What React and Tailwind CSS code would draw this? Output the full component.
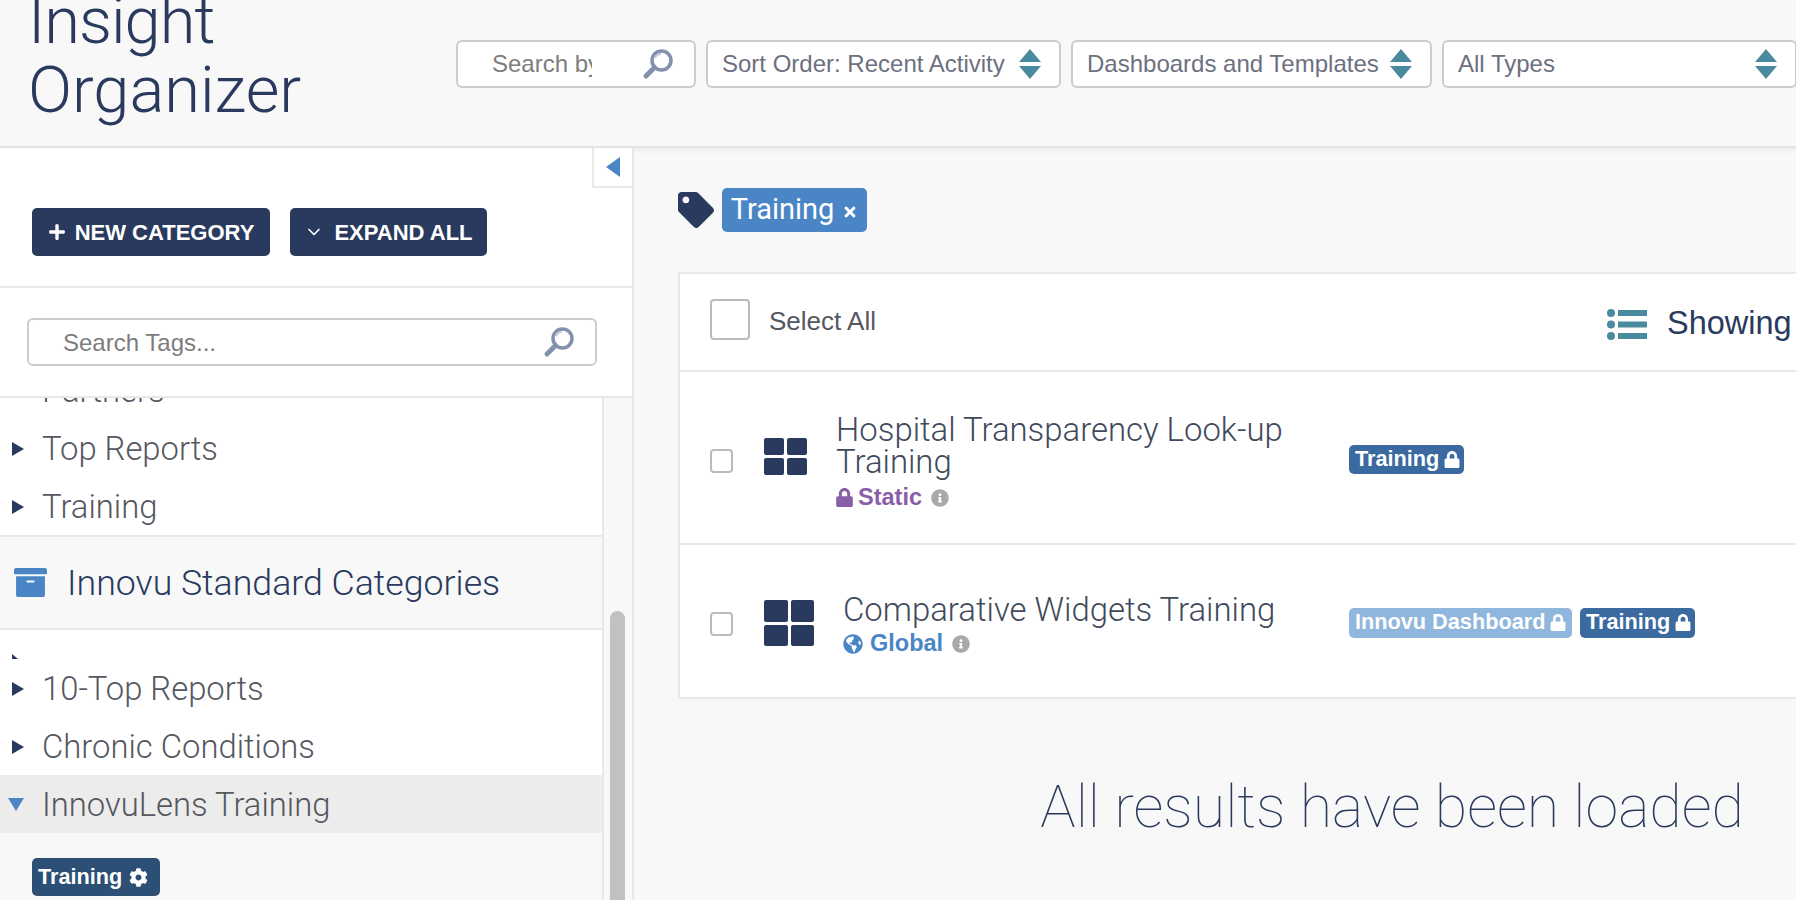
import React from "react";
import {
  FaPlus,
  FaTag,
  FaTimes,
  FaLock,
  FaCog,
  FaGlobeAmericas,
  FaInfoCircle,
  FaArchive,
} from "react-icons/fa";
import { FiChevronDown } from "react-icons/fi";

const light = "font-['Roboto','Liberation_Sans',sans-serif] font-light";
const sans = "font-['Liberation_Sans',Arial,sans-serif]";

function Magnifier({ className }) {
  return (
    <svg viewBox="0 0 32 32" className={className} fill="none">
      <circle cx="19.5" cy="12.5" r="9.5" stroke="#8391ad" strokeWidth="3.5" />
      <path d="M13 10c1-2.5 3-4 6-4" stroke="#c5ccd9" strokeWidth="2" />
      <path d="M12.5 19.5 4 28" stroke="#8391ad" strokeWidth="5" strokeLinecap="round" />
    </svg>
  );
}

function SortArrows() {
  return (
    <svg viewBox="0 0 22 30" className="w-[22px] h-[30px] shrink-0" fill="#4a8a9e">
      <path d="M11 0 22 13H0z" />
      <path d="M11 30 22 17H0z" />
    </svg>
  );
}

function ListIcon() {
  return (
    <svg viewBox="0 0 40 31" className="ml-[731px] mt-[5px] shrink-0 w-[40px] h-[31px]" fill="#4a8a9e">
      <circle cx="4" cy="4" r="4" />
      <circle cx="4" cy="15.5" r="4" />
      <circle cx="4" cy="27" r="4" />
      <rect x="11" y="1" width="29" height="6" />
      <rect x="11" y="12.5" width="29" height="6" />
      <rect x="11" y="24" width="29" height="6" />
    </svg>
  );
}

function Select({ label, width }) {
  return (
    <div className={`${width} h-[48px] shrink-0 flex items-center justify-between pl-[14px] pr-[18px] bg-white border-2 border-[#cccccc] rounded-[6px]`}>
      <span className={`${sans} text-[24px] text-[#6c7080] whitespace-nowrap`}>{label}</span>
      <SortArrows />
    </div>
  );
}

function TreeRow({ label, active }) {
  return (
    <div className={`h-[58px] flex items-center shrink-0 ${active ? "bg-[#ececec]" : ""}`}>
      {active ? (
        <span className="ml-[8px] w-0 h-0 border-x-[8px] border-x-transparent border-t-[13px] border-t-[#4a86c5]" />
      ) : (
        <span className="ml-[12px] mt-[1px] w-0 h-0 border-y-[7px] border-y-transparent border-l-[12px] border-l-[#2a3a5e]" />
      )}
      <span className={`${light} pl-[18px] mt-[3px] text-[32.8px] text-[#55585f] whitespace-nowrap`}>{label}</span>
    </div>
  );
}

function Badge({ children, className }) {
  return (
    <span className={`inline-flex items-center gap-[5px] px-[6px] rounded-[5px] text-white font-bold text-[21.7px] whitespace-nowrap ${sans} ${className}`}>
      {children}
    </span>
  );
}

function BadgeLock() {
  return <FaLock className="shrink-0 w-[16px] h-[17px]" />;
}

function GridIcon({ className }) {
  return (
    <div className={`grid grid-cols-2 grid-rows-2 gap-[3px] shrink-0 ${className}`}>
      <span className="bg-[#2a3a5e] rounded-[2px]" />
      <span className="bg-[#2a3a5e] rounded-[2px]" />
      <span className="bg-[#2a3a5e] rounded-[2px]" />
      <span className="bg-[#2a3a5e] rounded-[2px]" />
    </div>
  );
}

function Sidebar() {
  return (
    <aside className="relative w-[634px] h-[752px] shrink-0 bg-white border-r-2 border-[#e8e8e8] flex flex-col overflow-hidden">
      <div className="absolute top-0 right-0 w-[40px] h-[40px] bg-white border-l-2 border-b-2 border-[#e8e8e8] flex items-center justify-center">
        <span className="w-0 h-0 border-y-[10px] border-y-transparent border-r-[14px] border-r-[#4a86c5]" />
      </div>

      <div className="h-[140px] shrink-0 border-b-2 border-[#e8e8e8] flex items-start gap-[20px] pl-[32px] pt-[60px]">
        <button className={`${sans} h-[48px] w-[238px] flex items-center justify-center gap-[9px] bg-[#2a3a5e] text-white font-bold text-[22px] rounded-[5px]`}>
          <FaPlus className="w-[18px] h-[18px]" />
          NEW CATEGORY
        </button>
        <button className={`${sans} h-[48px] w-[197px] flex items-center justify-center gap-[10px] bg-[#2a3a5e] text-white font-bold text-[22px] rounded-[5px]`}>
          <FiChevronDown className="w-[20px] h-[20px]" />
          EXPAND ALL
        </button>
      </div>

      <div className="h-[110px] shrink-0 border-b-2 border-[#e8e8e8] pl-[27px] pt-[30px]">
        <div className="w-[570px] h-[48px] flex items-center justify-between pl-[34px] pr-[20px] border-2 border-[#cccccc] rounded-[6px]">
          <span className={`${sans} mt-[2px] text-[24px] text-[#7d7d7d]`}>Search Tags...</span>
          <Magnifier className="w-[32px] h-[32px]" />
        </div>
      </div>

      <div className="flex-1 flex min-h-0">
        <div className="w-[604px] shrink-0 flex flex-col min-h-0 border-r-2 border-[#e8e8e8]">
          <div className="h-[137px] shrink-0 overflow-hidden flex flex-col justify-end">
            <TreeRow label="Partners" />
            <TreeRow label="Top Reports" />
            <TreeRow label="Training" />
          </div>
          <div className="h-[95px] shrink-0 bg-[#f8f8f8] border-y-2 border-[#e8e8e8] flex items-center gap-[20px] pl-[14px]">
            <FaArchive className="w-[33px] h-[33px] text-[#4a86c5]" />
            <span className={`${light} mt-[3px] text-[35.7px] text-[#2a3a5e] whitespace-nowrap`}>Innovu Standard Categories</span>
          </div>
          <div className="h-[29px] shrink-0 flex items-end">
            <span className="ml-[12px] w-0 h-0 border-t-[5px] border-t-transparent border-l-[6px] border-l-[#2a3a5e]" />
          </div>
          <TreeRow label="10-Top Reports" />
          <TreeRow label="Chronic Conditions" />
          <TreeRow label="InnovuLens Training" active />
          <div className="flex-1 bg-[#f8f8f8] pl-[32px] pt-[25px]">
            <Badge className="h-[38px] w-[128px] bg-[#2c5075]">
              Training <FaCog className="ml-[2px] w-[19px] h-[19px]" />
            </Badge>
          </div>
        </div>
        <div className="flex-1 bg-[#f8f8f8] pl-[6px] pt-[213px]">
          <div className="w-[15px] h-[300px] bg-[#c1c1c1] rounded-full" />
        </div>
      </div>
    </aside>
  );
}

function ResultRow({ height, title, titleClass, iconClass, status, tags }) {
  return (
    <div className={`${height} flex items-center border-t-2 border-[#e8e8e8]`}>
      <div className="w-[23px] h-[24px] ml-[30px] mt-[6px] border-2 border-[#bbbbbb] rounded-[4px] shrink-0" />
      <GridIcon className={`ml-[31px] ${iconClass}`} />
      <div className={`${titleClass} mt-[14px] shrink-0 flex flex-col`}>
        <div className={`${light} text-[32.9px] leading-[32px] text-[#414a5c]`}>{title}</div>
        {status}
      </div>
      <div className="mt-[3px] flex items-center gap-[8px]">{tags}</div>
    </div>
  );
}

function Main() {
  return (
    <main className="flex-1 min-w-0 pl-[44px] overflow-hidden">
      <div className="h-[124px] flex items-start pt-[40px]">
        <FaTag className="mt-[4px] w-[36px] h-[36px] text-[#2a3a5e]" />
        <div className="ml-[8px] h-[44px] w-[145px] flex items-center justify-center gap-[8px] bg-[#4a86c5] rounded-[5px] text-white">
          <span className={`${light} text-[29px] font-normal`}>Training</span>
          <FaTimes className="w-[16px] h-[16px] mt-[4px]" />
        </div>
      </div>

      <div className="w-[1130px] bg-white border-2 border-r-0 border-[#e8e8e8]">
        <div className="h-[96px] flex items-center">
          <div className="ml-[30px] -mt-[5px] w-[40px] h-[41px] border-2 border-[#bbbbbb] rounded-[4px] shrink-0" />
          <span className={`${sans} ml-[19px] -mt-[1px] shrink-0 whitespace-nowrap text-[26px] text-[#55585f]`}>Select All</span>
          <ListIcon />
          <span className={`${sans} ml-[20px] mt-[3px] shrink-0 whitespace-nowrap text-[32.5px] text-[#2a3a5e]`}>Showing</span>
        </div>

        <ResultRow
          height="h-[173px]"
          title="Hospital Transparency Look-up Training"
          titleClass="ml-[29px] w-[513px]"
          iconClass="-mt-[2px] w-[43px] h-[37px]"
          status={
            <div className={`${sans} mt-[2px] flex items-center text-[23.5px] font-bold text-[#8a5ea6]`}>
              <FaLock className="w-[17px] h-[19px] mr-[5px]" />
              Static
              <FaInfoCircle className="w-[18px] h-[18px] ml-[9px] text-[#a9a9a9]" />
            </div>
          }
          tags={
            <Badge className="h-[29px] w-[115px] bg-[#3a6a9f]">
              Training <BadgeLock />
            </Badge>
          }
        />

        <ResultRow
          height="h-[154px]"
          title="Comparative Widgets Training"
          titleClass="ml-[29px] w-[506px]"
          iconClass="mt-[4px] w-[50px] h-[46px]"
          status={
            <div className={`${sans} flex items-center text-[23.5px] font-bold text-[#4a86c5]`}>
              <FaGlobeAmericas className="w-[20px] h-[20px] mr-[7px]" />
              Global
              <FaInfoCircle className="w-[18px] h-[18px] ml-[9px] text-[#a9a9a9]" />
            </div>
          }
          tags={
            <>
              <Badge className="h-[30px] w-[223px] bg-[#8fb6dd]">
                Innovu Dashboard <BadgeLock />
              </Badge>
              <Badge className="h-[30px] w-[115px] bg-[#3a6a9f]">
                Training <BadgeLock />
              </Badge>
            </>
          }
        />
      </div>

      <div className={`${light} w-[1066px] mt-[69px] text-right text-[59.2px] leading-[78px] text-[#2a3a5e] font-thin whitespace-nowrap`}>
        All results have been loaded
      </div>
    </main>
  );
}

export default function App() {
  return (
    <div className="w-[1796px] h-[900px] overflow-hidden bg-[#f8f8f8] flex flex-col">
      <header className="h-[148px] shrink-0 flex items-start border-b-2 border-[#e4e4e4] shadow-[0_2px_6px_rgba(0,0,0,0.06)] overflow-hidden">
        <h1 className={`${light} w-[456px] shrink-0 pl-[28px] -mt-[13px] text-[65px] leading-[69px] text-[#2a3a5e]`}>
          <span className="tracking-[-1px]">Insight</span>
          <br />
          Organizer
        </h1>
        <div className="flex gap-[10px] pt-[40px]">
          <div className="w-[240px] h-[48px] shrink-0 flex items-center justify-between pl-[34px] pr-[20px] bg-white border-2 border-[#cccccc] rounded-[6px]">
            <span className={`${sans} w-[100px] overflow-hidden whitespace-nowrap text-[24px] text-[#7d7d7d]`}>Search by name</span>
            <Magnifier className="w-[32px] h-[32px]" />
          </div>
          <Select label="Sort Order: Recent Activity" width="w-[355px]" />
          <Select label="Dashboards and Templates" width="w-[361px]" />
          <Select label="All Types" width="w-[355px]" />
        </div>
      </header>
      <div className="flex-1 flex min-h-0">
        <Sidebar />
        <Main />
      </div>
    </div>
  );
}
